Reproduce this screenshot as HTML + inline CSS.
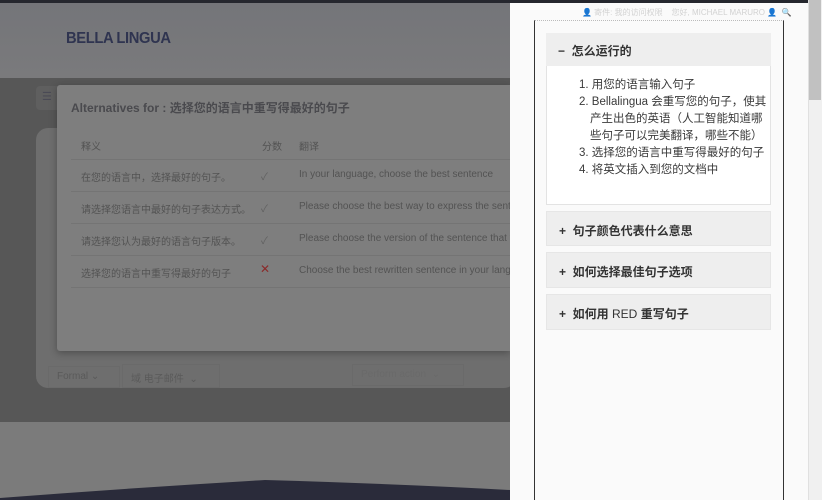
<!DOCTYPE html>
<html><head><meta charset="utf-8"><style>
*{margin:0;padding:0;box-sizing:border-box}
body{width:822px;height:500px;overflow:hidden;position:relative;font-family:"Liberation Sans","Noto Sans CJK SC",sans-serif;background:#7a7a7a}
.abs{position:absolute}
</style></head><body>
<div class="abs" style="left:0;top:0;width:510px;height:3px;background:#25272e"></div>
<div class="abs" style="left:0;top:3px;width:510px;height:75px;background:linear-gradient(#747579,#7a7a7c)"></div>
<div class="abs" style="left:66px;top:30px;font-size:16px;font-weight:bold;color:#2f3450;letter-spacing:-0.4px;transform:scaleX(0.92);transform-origin:left">BELLA LINGUA</div>
<div class="abs" style="left:0;top:78px;width:510px;height:344px;background:#575757"></div>
<div class="abs" style="left:36px;top:86px;width:30px;height:24px;background:#5f5f5f;border-radius:4px;color:#4a4a55;font-size:11px;padding:4px 0 0 6px">☰</div>
<div class="abs" style="left:36px;top:128px;width:480px;height:260px;background:#6e6e6e;border-radius:12px"></div>
<div class="abs" style="left:48px;top:366px;width:72px;height:22px;border:1px solid #6a6a6a;font-size:10px;color:#5a5a5a;padding:4px 8px">Formal ⌄</div>
<div class="abs" style="left:122px;top:364px;width:98px;height:24px;border:1px solid #6a6a6a;font-size:10px;color:#5a5a5a;padding:5px 8px">域 电子邮件 &nbsp;⌄</div>
<div class="abs" style="left:352px;top:364px;width:112px;height:22px;border:1px solid #6a6a6a;font-size:10px;color:#6a6a6a;padding:4px 8px">Perform action &nbsp;⌄</div>
<div class="abs" style="left:0;top:422px;width:510px;height:78px;background:#7b7b7b"></div>
<svg class="abs" style="left:0;top:470px" width="510" height="30"><path d="M0 30 L0 28 Q130 18 265 10 Q400 14 510 20 L510 30Z" fill="#2a2b3a"/></svg>
<div class="abs" style="left:57px;top:85px;width:453px;height:266px;background:#7e7e7e;border-radius:3px 0 0 3px;box-shadow:0 2px 8px rgba(0,0,0,.3)"></div>
<div class="abs" style="left:71px;top:99px;font-size:12px;font-weight:bold;color:#4a4a4e">Alternatives for : 选择您的语言中重写得最好的句子</div>
<div class="abs" style="left:71px;top:129px;width:439px;font-size:10px;color:#535353">
 <div style="height:31px;border-bottom:1px solid #747474;position:relative"><span class="abs" style="left:10px;top:9px">释义</span><span class="abs" style="left:191px;top:9px">分数</span><span class="abs" style="left:228px;top:9px">翻译</span></div>
 <div style="height:32px;border-bottom:1px solid #747474;position:relative;white-space:nowrap"><span class="abs" style="left:10px;top:9px">在您的语言中，选择最好的句子。</span><span class="abs" style="left:190px;top:8px;color:#606060">✓</span><span class="abs" style="left:228px;top:9px">In your language, choose the best sentence</span></div>
 <div style="height:32px;border-bottom:1px solid #747474;position:relative;white-space:nowrap;overflow:hidden"><span class="abs" style="left:10px;top:9px">请选择您语言中最好的句子表达方式。</span><span class="abs" style="left:190px;top:8px;color:#606060">✓</span><span class="abs" style="left:228px;top:9px">Please choose the best way to express the sentence</span></div>
 <div style="height:32px;border-bottom:1px solid #747474;position:relative;white-space:nowrap;overflow:hidden"><span class="abs" style="left:10px;top:9px">请选择您认为最好的语言句子版本。</span><span class="abs" style="left:190px;top:8px;color:#606060">✓</span><span class="abs" style="left:228px;top:9px">Please choose the version of the sentence that you</span></div>
 <div style="height:32px;border-bottom:1px solid #747474;position:relative;white-space:nowrap;overflow:hidden"><span class="abs" style="left:10px;top:9px">选择您的语言中重写得最好的句子</span><span class="abs" style="left:189px;top:6px;color:#8a2a2a;font-size:12px">✕</span><span class="abs" style="left:228px;top:9px">Choose the best rewritten sentence in your language</span></div>
</div>
<div class="abs" style="left:510px;top:0;width:298px;height:500px;background:#fafafa"></div>
<div class="abs" style="left:510px;top:0;width:298px;height:3px;background:#25272e"></div>
<div class="abs" style="left:582px;top:7px;font-size:8px;color:#d2d2d2;white-space:nowrap">👤 寄件: 我的访问权限 &nbsp;&nbsp; 您好, MICHAEL MARURO 👤 &nbsp;🔍</div>
<div class="abs" style="left:808px;top:0;width:14px;height:500px;background:#f0f0f0;border-left:1px solid #e0e0e0"></div>
<div class="abs" style="left:809px;top:0;width:12px;height:100px;background:#c1c1c1"></div>
<div class="abs" style="left:534px;top:20px;width:250px;height:480px;border-left:1px solid #333;border-right:1px solid #333;border-top:1px dotted #bbb;background:#fafafa"></div>
<div class="abs" style="left:546px;top:33px;width:225px;height:172px;border:1px solid #e3e3e3;background:#fff"></div>
<div class="abs" style="left:546px;top:33px;width:225px;height:33px;background:#eeeeee;font-size:12px;font-weight:bold;color:#333;padding:9px 0 0 12px">−&nbsp;&nbsp;怎么运行的</div>
<div class="abs" style="left:579px;top:77px;width:190px;font-size:11.5px;line-height:17px;color:#3a3a3a">
<div>1. 用您的语言输入句子</div>
<div style="padding-left:11px;text-indent:-11px">2. Bellalingua 会重写您的句子，使其产生出色的英语（人工智能知道哪些句子可以完美翻译，哪些不能）</div>
<div>3. 选择您的语言中重写得最好的句子</div>
<div>4. 将英文插入到您的文档中</div>
</div>
<div class="abs" style="left:546px;top:211px;width:225px;height:35px;background:#eeeeee;border:1px solid #e6e6e6;font-size:12px;font-weight:bold;color:#333;padding:10px 0 0 12px">+&nbsp;&nbsp;句子颜色代表什么意思</div>
<div class="abs" style="left:546px;top:252px;width:225px;height:36px;background:#eeeeee;border:1px solid #e6e6e6;font-size:12px;font-weight:bold;color:#333;padding:10px 0 0 12px">+&nbsp;&nbsp;如何选择最佳句子选项</div>
<div class="abs" style="left:546px;top:294px;width:225px;height:36px;background:#eeeeee;border:1px solid #e6e6e6;font-size:12px;font-weight:bold;color:#333;padding:10px 0 0 12px">+&nbsp;&nbsp;如何用 <span style="font-weight:normal">RED</span> 重写句子</div>
</body></html>
